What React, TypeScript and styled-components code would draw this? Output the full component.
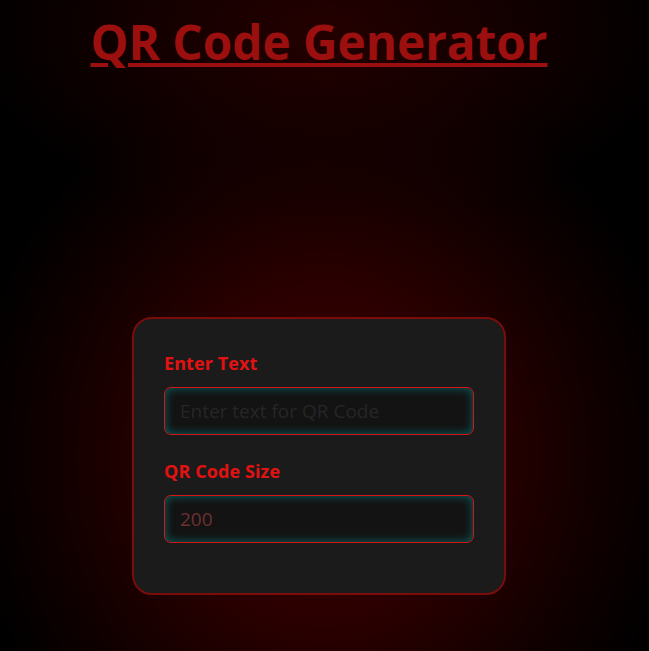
import React from "react";
import styled, { createGlobalStyle } from "styled-components";

const GlobalStyle = createGlobalStyle`
  html, body {
    margin: 0;
    padding: 0;
    min-height: 100%;
  }
  body {
    min-height: 651px;
    background-color: #000;
    background-image:
      radial-gradient(ellipse 360px 200px at 50% 30px, rgba(36, 0, 0, 1) 0%, rgba(24, 0, 0, 0.8) 50%, rgba(0, 0, 0, 0) 100%),
      radial-gradient(ellipse 360px 400px at 50% 455px, #3a0000 0%, #2c0000 40%, #110000 75%, #000 100%);
    background-repeat: no-repeat;
    font-family: "Open Sans", "Noto Sans", sans-serif;
  }
`;

const Page = styled.main`
  display: flex;
  flex-direction: column;
  align-items: center;
  padding: 0 11px 0 0;
`;

const Title = styled.h1`
  margin: 10px 0 0;
  font-size: 47.7px;
  line-height: 64px;
  font-weight: 700;
  color: #9c0f0f;
  text-decoration: underline;
  text-decoration-thickness: 4px;
  text-underline-offset: 3px;
`;

const Preview = styled.div`
  height: 243px;
`;

const Card = styled.section`
  width: 310px;
  padding: 32px 30px 50px;
  background: #1b1b1b;
  border: 2px solid #7a0c0c;
  border-radius: 20px;
  display: flex;
  flex-direction: column;
`;

const Field = styled.div<{ $last?: boolean }>`
  display: flex;
  flex-direction: column;
  gap: 12px;
  margin-bottom: ${(p) => (p.$last ? "0" : "24px")};
`;

const Label = styled.label`
  font-size: 18px;
  line-height: 24px;
  font-weight: 700;
  color: #e31212;
  letter-spacing: 0.1px;
`;

const Input = styled.input`
  box-sizing: border-box;
  width: 100%;
  height: 48px;
  padding: 0 15px;
  background: #131313;
  border: 1px solid #d41616;
  border-radius: 7px;
  box-shadow: inset 0 0 10px rgba(0, 170, 170, 0.55);
  font-family: "Open Sans", "Noto Sans", sans-serif;
  font-size: 19px;
  color: #6e3030;
  outline: none;
  &::placeholder {
    color: #262626;
  }
`;

export default function App() {
  return (
    <>
      <GlobalStyle />
      <Page>
        <Title>QR Code Generator</Title>
        <Preview />
        <Card>
          <Field>
            <Label htmlFor="qr-text">Enter Text</Label>
            <Input id="qr-text" type="text" placeholder="Enter text for QR Code" />
          </Field>
          <Field $last>
            <Label htmlFor="qr-size">QR Code Size</Label>
            <Input id="qr-size" type="number" defaultValue={200} />
          </Field>
        </Card>
      </Page>
    </>
  );
}
